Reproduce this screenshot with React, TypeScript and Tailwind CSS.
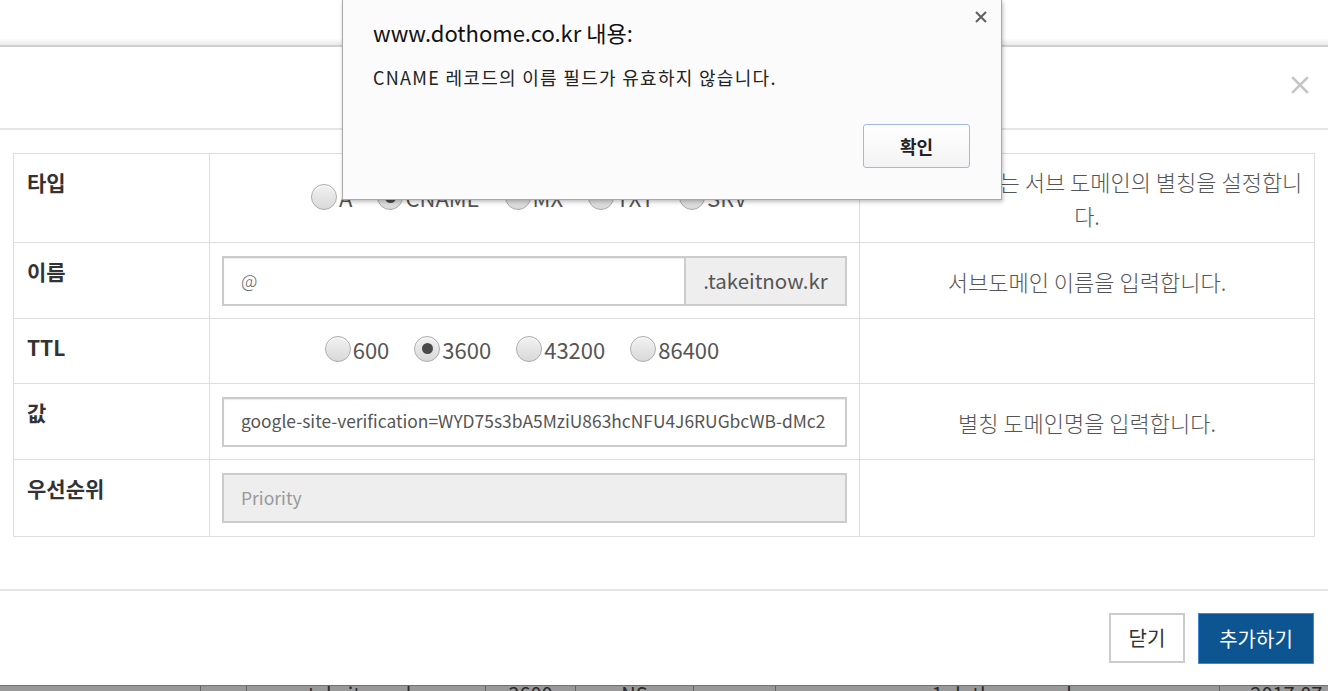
import React from "react";

const F = "font-['Noto_Sans_CJK_KR','Noto_Sans',sans-serif]";

function Radio({ checked }: { checked?: boolean }) {
  return (
    <span className="inline-flex w-[26px] h-[26px] shrink-0 items-center justify-center rounded-full border border-[#ababab] bg-linear-to-b from-[#f2f2f2] to-[#d9d9d9] shadow-[inset_0_1px_1px_rgba(255,255,255,0.9)]">
      {checked && <span className="block w-[11px] h-[11px] rounded-full bg-[#4a4a4a]" />}
    </span>
  );
}

function RadioItem({ label, checked }: { label: string; checked?: boolean }) {
  return (
    <span className="inline-flex items-center mr-[25px]">
      <Radio checked={checked} />
      <span className="ml-[2px] text-[22px] leading-[28px] text-[#555]">{label}</span>
    </span>
  );
}

function Label({ children }: { children: React.ReactNode }) {
  return (
    <div className="border-r border-b border-[#dddddd] pl-[13px] pt-[12px] text-[21px] leading-[32px] font-bold text-[#333]">
      {children}
    </div>
  );
}

function Desc({ children, tight }: { children?: React.ReactNode; tight?: boolean }) {
  return (
    <div
      className={
        "border-r border-b border-[#dddddd] flex items-center justify-center text-center text-[22px] leading-[32px] font-light text-[#555] " +
        (tight ? "px-[6px]" : "px-[15px]")
      }
    >
      {children}
    </div>
  );
}

function Mid({ children, center }: { children?: React.ReactNode; center?: boolean }) {
  return (
    <div
      className={
        "border-r border-b border-[#dddddd] px-[12px] flex items-center " +
        (center ? "justify-center" : "")
      }
    >
      {children}
    </div>
  );
}

export default function App() {
  return (
    <div className={"relative w-[1328px] h-[691px] overflow-hidden bg-white " + F}>
      {/* strip above modal */}
      <div className="h-[45px] bg-linear-to-b from-white from-[85%] to-[#e9e9e9]" />

      {/* modal */}
      <div className="border-t-2 border-[#cfcfcf] bg-white">
        <div className="h-[83px] flex items-center justify-end pr-[19px] border-b-2 border-[#e5e5e5]">
          <svg width="18" height="18" viewBox="0 0 18 18" className="-mt-[6px]">
            <path d="M2 2 L16 16 M16 2 L2 16" stroke="#c6c6c6" strokeWidth="2.6" strokeLinecap="square" />
          </svg>
        </div>

        <div className="pt-[23px] pb-[52px] px-[13px]">
          <div className="grid grid-cols-[196px_650px_455px] grid-rows-[89px_76px_65px_76px_77px] border-l border-t border-[#dddddd]">
            <Label>타입</Label>
            <Mid center>
              <div className="flex items-center pl-[14px] -mt-[2px]">
                <RadioItem label="A" />
                <RadioItem label="CNAME" checked />
                <RadioItem label="MX" />
                <RadioItem label="TXT" />
                <RadioItem label="SRV" />
              </div>
            </Mid>
            <Desc tight>
              <span>
                <span className="text-[19px]">CNAME</span> 레코드는 서브 도메인의 별칭을 설정합니다.
              </span>
            </Desc>

            <Label>이름</Label>
            <Mid>
              <div className="flex w-full h-[50px]">
                <div className="flex-1 border-2 border-[#cccccc] bg-white shadow-[inset_0_1px_1px_rgba(0,0,0,0.08)] pl-[17px] flex items-center text-[18px] font-light text-[#666]">
                  @
                </div>
                <div className="w-[161px] border-2 border-l-0 border-[#cccccc] bg-[#eeeeee] flex items-center justify-center text-[20.5px] text-[#555]">
                  .takeitnow.kr
                </div>
              </div>
            </Mid>
            <Desc>서브도메인 이름을 입력합니다.</Desc>

            <Label>TTL</Label>
            <Mid center>
              <div className="flex items-center -mt-[5px]">
                <RadioItem label="600" />
                <RadioItem label="3600" checked />
                <RadioItem label="43200" />
                <RadioItem label="86400" />
              </div>
            </Mid>
            <Desc />

            <Label>값</Label>
            <Mid>
              <div className="w-full h-[50px] border-2 border-[#cccccc] bg-white shadow-[inset_0_1px_1px_rgba(0,0,0,0.08)] pl-[17px] flex items-center text-[17.4px] text-[#555] whitespace-nowrap overflow-hidden">
                google-site-verification=WYD75s3bA5MziU863hcNFU4J6RUGbcWB-dMc2
              </div>
            </Mid>
            <Desc>별칭 도메인명을 입력합니다.</Desc>

            <Label>우선순위</Label>
            <Mid>
              <div className="w-full h-[50px] border-2 border-[#cccccc] bg-[#eeeeee] pl-[17px] flex items-center text-[17.5px] text-[#999]">
                Priority
              </div>
            </Mid>
            <Desc />
          </div>
        </div>

        <div className="border-t-2 border-[#e5e5e5] pt-[22px] pb-[21px] pr-[14px] flex justify-end gap-[13px]">
          <button className="w-[76px] h-[50px] border-2 border-[#cccccc] bg-white text-[20px] text-[#333]">
            닫기
          </button>
          <button className="w-[116px] h-[51px] border border-[#3f86dc] bg-[#0c5590] text-[20px] text-white">
            추가하기
          </button>
        </div>
      </div>

      {/* dimmed page underneath */}
      <div className="h-[6px] bg-[#999999] border-t border-[#707070] flex text-[20px] text-[#2a2a2a] overflow-hidden">
        <div className="w-[202px] border-r border-[#666]" />
        <div className="w-[46px] border-r border-[#666]" />
        <div className="w-[240px] border-r border-[#666] text-center leading-[20px] -mt-[2px]">takeitnow.kr</div>
        <div className="w-[90px] border-r border-[#666] text-center leading-[20px] -mt-[2px]">3600</div>
        <div className="w-[119px] border-r border-[#666] text-center leading-[20px] -mt-[2px]">NS</div>
        <div className="w-[82px] border-r border-[#666]" />
        <div className="w-[446px] border-r border-[#666] text-center leading-[20px] -mt-[2px]">ns1.dothome.co.kr</div>
        <div className="flex-1 pl-[30px] leading-[20px] -mt-[2px]">2017.07.</div>
      </div>

      {/* browser alert dialog */}
      <div className="absolute left-[342px] top-0 w-[660px] h-[200px] bg-[#fbfbfb] border border-t-0 border-[#a8a8a8] shadow-[1px_2px_4px_rgba(0,0,0,0.25)] flex flex-col">
        <div className="flex justify-between items-start">
          <div className="pl-[30px] pt-[17px] text-[22px] leading-[30px] text-[#111]">
            www.dothome.co.kr 내용:
          </div>
          <svg width="12" height="12" viewBox="0 0 12 12" className="mt-[11px] mr-[14px]">
            <path d="M1 1 L11 11 M11 1 L1 11" stroke="#5f5f5f" strokeWidth="2" />
          </svg>
        </div>
        <div className="pl-[30px] pt-[17px] text-[18px] leading-[26px] tracking-[1.3px] text-[#222]">
          CNAME 레코드의 이름 필드가 유효하지 않습니다.
        </div>
        <div className="flex justify-end pr-[31px] pt-[34px]">
          <button className="w-[107px] h-[44px] rounded-[3px] border border-[#9ebbe8] bg-linear-to-b from-white to-[#f3f3f3] text-[18px] font-bold text-[#222]">
            확인
          </button>
        </div>
      </div>
    </div>
  );
}
